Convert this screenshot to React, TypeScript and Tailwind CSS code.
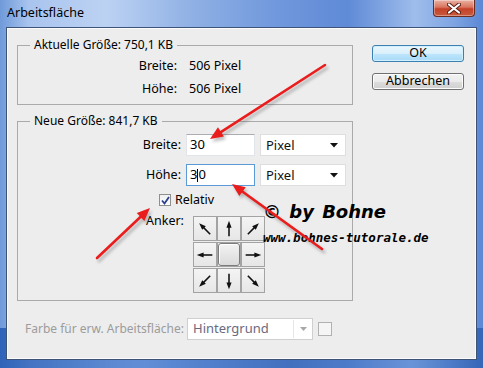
import React from "react";

const F = "font-['Noto_Sans',sans-serif]";

function arrowHead(tail: [number, number], tip: [number, number], L = 13, W = 5.5) {
  const dx = tip[0] - tail[0];
  const dy = tip[1] - tail[1];
  const len = Math.hypot(dx, dy);
  const ux = dx / len;
  const uy = dy / len;
  const bx = tip[0] - ux * L;
  const by = tip[1] - uy * L;
  const nx = -uy * W;
  const ny = ux * W;
  return {
    pts: `${tip[0]},${tip[1]} ${bx + nx},${by + ny} ${bx - nx},${by - ny}`,
    end: [bx + ux * 2, by + uy * 2] as [number, number],
  };
}

function RedArrow({ tail, tip }: { tail: [number, number]; tip: [number, number] }) {
  const h = arrowHead(tail, tip);
  return (
    <g>
      <g opacity="0.35" transform="translate(2,3)">
        <line x1={tail[0]} y1={tail[1]} x2={h.end[0]} y2={h.end[1]} stroke="#555" strokeWidth="3" strokeLinecap="round" filter="url(#blur)" />
        <polygon points={h.pts} fill="#555" filter="url(#blur)" />
      </g>
      <line x1={tail[0]} y1={tail[1]} x2={h.end[0]} y2={h.end[1]} stroke="#ea1c1c" strokeWidth="2.6" strokeLinecap="round" />
      <polygon points={h.pts} fill="#ea1c1c" />
    </g>
  );
}

function AnchorArrow({ angle }: { angle: number }) {
  return (
    <svg width="22" height="22" viewBox="0 0 24 24">
      <g transform={`rotate(${angle} 12 12)`}>
        <line x1="12" y1="20" x2="12" y2="8" stroke="#111" strokeWidth="1.7" />
        <polygon points="12,3 9.2,10.5 14.8,10.5" fill="#111" />
      </g>
    </svg>
  );
}

function Cell({ angle }: { angle?: number }) {
  return (
    <div className="w-[24px] h-[25px] border border-[#a3a3a3] bg-[linear-gradient(#f4f4f4,#e6e6e6)] flex items-center justify-center">
      {angle !== undefined ? <AnchorArrow angle={angle} /> : null}
    </div>
  );
}

function CenterCell() {
  return (
    <div className="w-[24px] h-[25px] border border-[#a3a3a3] bg-[#ececec] flex items-center justify-center">
      <div className="w-[22px] h-[23px] rounded-[3px] border border-[#7c7c7c] bg-[linear-gradient(#f3f3f3,#dadada)] shadow-[inset_1px_1px_0_#fff]" />
    </div>
  );
}

function Select({ label, w }: { label: string; w: string }) {
  return (
    <div className={`${w} h-[22px] bg-white border border-[#dedede] flex items-center justify-between pl-[5px] pr-[7px]`}>
      <span className="text-[13px] leading-none text-[#111]">{label}</span>
      <svg width="8" height="5" viewBox="0 0 8 5">
        <polygon points="0,0 8,0 4,4.5" fill="#111" />
      </svg>
    </div>
  );
}

export default function App() {
  const a1 = { tail: [325, 65] as [number, number], tip: [210, 139] as [number, number] };
  const a2 = { tail: [322, 249] as [number, number], tip: [232, 184] as [number, number] };
  const a3 = { tail: [97, 258] as [number, number], tip: [150, 208] as [number, number] };

  return (
    <div className={`relative w-[483px] h-[368px] overflow-hidden ${F} text-[12px] text-black bg-[linear-gradient(90deg,#6f9ad9_0%,#a9c4ee_6%,#bcd2f3_22%,#8fb0e4_40%,#6f97dc_58%,#5f8ad6_72%,#9fbdec_86%,#7ea4e2_94%,#5b87d4_100%)] flex flex-col`}>
      {/* lower frame darkening */}
      <div className="absolute inset-x-0 bottom-0 h-[40px] bg-[linear-gradient(90deg,#1f56b0,#4f80d0_30%,#3766b8_60%,#5d8ad4_85%,#2a5cb0)] opacity-80" />
      {/* title bar */}
      <div className="relative h-[27px] flex items-start justify-between shrink-0">
        <span className="pl-[7px] pt-[5px] text-[12.5px] leading-[16px] text-black">Arbeitsfläche</span>
        <div className="mr-[8px] w-[42px] h-[17px] rounded-b-[4px] border border-t-0 border-[#6b2c22] bg-[linear-gradient(#eab2a3_0%,#d9745e_45%,#c4412a_55%,#c65a3d_100%)] flex items-center justify-center shadow-[inset_0_0_0_1px_rgba(255,255,255,0.35)]">
          <svg width="14" height="11" viewBox="0 0 14 11">
            <path d="M2 1.5 L12 9.5 M12 1.5 L2 9.5" stroke="#5a1d14" strokeWidth="4" strokeLinecap="round" />
            <path d="M2 1.5 L12 9.5 M12 1.5 L2 9.5" stroke="#fff" strokeWidth="2.2" strokeLinecap="round" />
          </svg>
        </div>
      </div>

      {/* client area */}
      <div className="relative mx-[6px] mb-[8px] flex-1 border border-[#3d5478] bg-[#ededed] shadow-[inset_0_0_0_1px_#fbfbfb]">
        <div className="flex pl-[10px]">
          {/* left column */}
          <div className="w-[336px] flex flex-col pt-[10px]">
            <fieldset className="border border-[#aaaaaa] h-[67px]">
              <legend className="ml-[12px] px-[4px] leading-[14px] text-[12px]">Aktuelle Größe: 750,1 KB</legend>
              <div className="grid grid-cols-[159px_auto] gap-x-[12px] gap-y-[5px] pt-[5px] leading-[18px] text-[12.5px]">
                <span className="text-right">Breite:</span>
                <span>506 Pixel</span>
                <span className="text-right">Höhe:</span>
                <span>506 Pixel</span>
              </div>
            </fieldset>

            <fieldset className="mt-[9px] border border-[#aaaaaa] h-[187px]">
              <legend className="ml-[12px] px-[4px] leading-[14px] text-[12px]">Neue Größe: 841,7 KB</legend>
              <div className="flex flex-col pt-[6px]">
                <div className="flex items-center h-[22px]">
                  <span className="w-[163px] text-right text-[12.5px]">Breite:</span>
                  <div className="ml-[5px] w-[69px] h-[22px] bg-white border border-[#e1e5ea] border-t-[#abadb3] flex items-center pl-[3px] text-[13px]">30</div>
                  <div className="ml-[5px]"><Select label="Pixel" w="w-[86px]" /></div>
                </div>
                <div className="flex items-center h-[22px] mt-[8px]">
                  <span className="w-[163px] text-right text-[12.5px]">Höhe:</span>
                  <div className="ml-[5px] w-[69px] h-[22px] bg-white border border-[#5b9ad6] flex items-center pl-[3px] text-[13px]">
                    3<span className="inline-block w-px h-[13px] bg-black" />0
                  </div>
                  <div className="ml-[5px]"><Select label="Pixel" w="w-[86px]" /></div>
                </div>
                <div className="flex items-center mt-[7px] pl-[141px] h-[14px]">
                  <div className="w-[12px] h-[12px] border border-[#8e8f8f] bg-[linear-gradient(#f0f0f0,#fdfdfd)] flex items-center justify-center">
                    <svg width="9" height="9" viewBox="0 0 9 9">
                      <path d="M1 4.5 L3.5 7.5 L8 1" stroke="#2a3f8f" strokeWidth="1.8" fill="none" />
                    </svg>
                  </div>
                  <span className="ml-[4px] text-[12.5px] leading-[14px]">Relativ</span>
                </div>
                <div className="flex mt-[9px]">
                  <span className="pl-[128px] text-[12.5px] leading-[14px] -mt-[2px]">Anker:</span>
                  <div className="ml-[9px] flex flex-col gap-[1px]">
                    <div className="flex">
                      <Cell angle={-45} />
                      <Cell angle={0} />
                      <Cell angle={45} />
                    </div>
                    <div className="flex">
                      <Cell angle={-90} />
                      <CenterCell />
                      <Cell angle={90} />
                    </div>
                    <div className="flex">
                      <Cell angle={-135} />
                      <Cell angle={180} />
                      <Cell angle={135} />
                    </div>
                  </div>
                </div>
              </div>
            </fieldset>

            <div className="flex items-center mt-[17px]">
              <span className="ml-[8px] w-[162px] whitespace-nowrap text-[12px] text-[#9c9c9c]">Farbe für erw. Arbeitsfläche:</span>
              <div className="w-[126px] h-[22px] bg-white border border-[#cfcfcf] flex items-center">
                <span className="flex-1 pl-[5px] text-[13px] text-[#6a6a80]">Hintergrund</span>
                <div className="w-px h-[18px] bg-[#e6e6e6]" />
                <div className="w-[18px] flex justify-center">
                  <svg width="7" height="4" viewBox="0 0 7 4">
                    <polygon points="0,0 7,0 3.5,4" fill="#a8a8a8" />
                  </svg>
                </div>
              </div>
              <div className="ml-[5px] w-[14px] h-[14px] border border-[#b1b1b1] bg-[#f5f5f5]" />
            </div>
          </div>

          {/* right column */}
          <div className="ml-[19px] pt-[17px] flex flex-col gap-[11px]">
            <div className="w-[92px] h-[17px] rounded-[3px] border border-[#3c7fb1] bg-[linear-gradient(#eaf6fd_0%,#d9f0fc_50%,#bee6fd_51%,#a7d9f5_100%)] shadow-[inset_0_0_0_1px_#d0f0ff] flex items-center justify-center text-[12.5px] leading-none">
              OK
            </div>
            <div className="w-[92px] h-[17px] rounded-[3px] border border-[#707070] bg-[linear-gradient(#f2f2f2_0%,#ebebeb_50%,#dddddd_51%,#cfcfcf_100%)] shadow-[inset_0_0_0_1px_#fcfcfc] flex items-center justify-center text-[12.5px] leading-none">
              Abbrechen
            </div>
          </div>
        </div>
      </div>

      {/* watermark */}
      <div className="absolute left-[263px] top-[200px] pointer-events-none">
        <div className="font-['DejaVu_Sans',sans-serif] font-bold italic text-[18px] leading-[24px] [word-spacing:2px] text-black">© by Bohne</div>
        <div className="mt-[7px] font-['DejaVu_Sans_Mono',monospace] font-bold italic text-[12.5px] leading-[14px] text-black">www.bohnes-tutorale.de</div>
      </div>

      {/* red arrows */}
      <svg className="absolute inset-0 pointer-events-none" width="483" height="368" viewBox="0 0 483 368">
        <defs>
          <filter id="blur" x="-20%" y="-20%" width="140%" height="140%">
            <feGaussianBlur stdDeviation="1.5" />
          </filter>
        </defs>
        <RedArrow {...a1} />
        <RedArrow {...a2} />
        <RedArrow {...a3} />
      </svg>
    </div>
  );
}
